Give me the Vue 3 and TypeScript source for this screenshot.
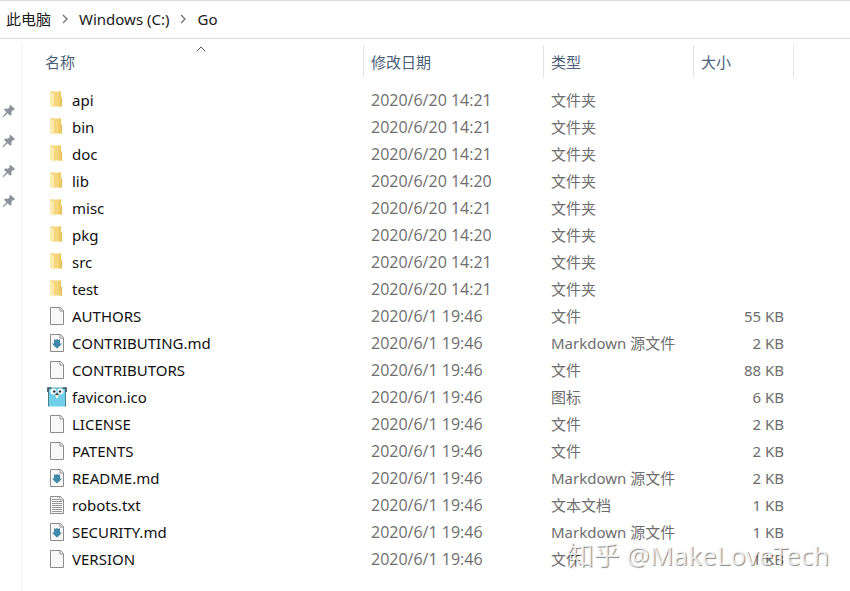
<script setup lang="ts">
type Kind = 'folder' | 'file' | 'markdown' | 'gopher' | 'text'

interface Entry {
  name: string
  modified: string
  kind: Kind
  size?: string
}

const crumbs: string[] = ['此电脑', 'Windows (C:)', 'Go']
const pinnedCount = 4

const typeLabels: Record<Kind, string> = {
  folder: '文件夹',
  file: '文件',
  markdown: 'Markdown 源文件',
  gopher: '图标',
  text: '文本文档',
}

const entries: Entry[] = [
  { name: 'api', modified: '2020/6/20 14:21', kind: 'folder' },
  { name: 'bin', modified: '2020/6/20 14:21', kind: 'folder' },
  { name: 'doc', modified: '2020/6/20 14:21', kind: 'folder' },
  { name: 'lib', modified: '2020/6/20 14:20', kind: 'folder' },
  { name: 'misc', modified: '2020/6/20 14:21', kind: 'folder' },
  { name: 'pkg', modified: '2020/6/20 14:20', kind: 'folder' },
  { name: 'src', modified: '2020/6/20 14:21', kind: 'folder' },
  { name: 'test', modified: '2020/6/20 14:21', kind: 'folder' },
  { name: 'AUTHORS', modified: '2020/6/1 19:46', kind: 'file', size: '55 KB' },
  { name: 'CONTRIBUTING.md', modified: '2020/6/1 19:46', kind: 'markdown', size: '2 KB' },
  { name: 'CONTRIBUTORS', modified: '2020/6/1 19:46', kind: 'file', size: '88 KB' },
  { name: 'favicon.ico', modified: '2020/6/1 19:46', kind: 'gopher', size: '6 KB' },
  { name: 'LICENSE', modified: '2020/6/1 19:46', kind: 'file', size: '2 KB' },
  { name: 'PATENTS', modified: '2020/6/1 19:46', kind: 'file', size: '2 KB' },
  { name: 'README.md', modified: '2020/6/1 19:46', kind: 'markdown', size: '2 KB' },
  { name: 'robots.txt', modified: '2020/6/1 19:46', kind: 'text', size: '1 KB' },
  { name: 'SECURITY.md', modified: '2020/6/1 19:46', kind: 'markdown', size: '1 KB' },
  { name: 'VERSION', modified: '2020/6/1 19:46', kind: 'file', size: '1 KB' },
]
</script>

<template>
  <div class="explorer">
    <nav class="path">
      <template v-for="(crumb, i) in crumbs" :key="crumb">
        <svg v-if="i > 0" class="chevron" viewBox="0 0 8 10">
          <path d="M2 1l4 4-4 4" fill="none" stroke="#777" stroke-width="1.4" />
        </svg>
        <a href="#">{{ crumb }}</a>
      </template>
    </nav>

    <div class="body">
      <aside class="pins">
        <svg v-for="n in pinnedCount" :key="n" class="pin" viewBox="0 0 14 14">
          <path
            d="M8.3 .8 L13 5 L11.6 6.2 L10.9 6.1 L9.4 8 L9.6 10.6 L8.2 11.7 L5.6 9.2 L1.8 12.8 L.6 13.2 L.9 12 L4.5 8.2 L2 5.8 L3.2 4.5 L6 4.7 L7.8 3 L7.3 1.9 Z"
            fill="#8b9299"
          />
        </svg>
      </aside>

      <main class="content">
        <table class="files">
          <colgroup>
            <col class="c-name" />
            <col class="c-date" />
            <col class="c-type" />
            <col class="c-size" />
            <col />
          </colgroup>
          <thead>
            <tr>
              <th scope="col" class="name">
                <button type="button">名称</button>
                <svg class="sort" viewBox="0 0 10 6">
                  <path d="M.7 5.3L5 1l4.3 4.3" fill="none" stroke="#555" />
                </svg>
              </th>
              <th scope="col"><button type="button">修改日期</button></th>
              <th scope="col"><button type="button">类型</button></th>
              <th scope="col"><button type="button">大小</button></th>
              <td></td>
            </tr>
          </thead>
          <tbody>
            <tr v-for="entry in entries" :key="entry.name">
              <td class="name">
                <div class="entry">
                  <svg v-if="entry.kind === 'folder'" class="icon" viewBox="0 0 20 20">
                    <path d="M3 1.5h11V7l1 1v8.5H6z" fill="#f5d67c" />
                    <path d="M11.5 1.5H14V7l1 1v8.5h-3.5z" fill="#efcb68" />
                    <path d="M14 8h1v8.5h-1z" fill="#e3bd58" />
                    <path d="M3 1.5l4 2.5v14l-4-2z" fill="#fdeab0" />
                    <path d="M3 1.5h4V4z" fill="#f3d98e" />
                  </svg>
                  <svg v-else-if="entry.kind === 'gopher'" class="icon" viewBox="0 0 20 20">
                    <path d="M1.5 1h17v18.5H1.5z" fill="#70cfe9" />
                    <path d="M1 5V1h3.5M15.5 1H19v4" fill="none" stroke="#344c55" stroke-width="1.6" />
                    <path d="M1.5 5v14.5M18.5 5v14.5" stroke="#4a7e8c" />
                    <path d="M4.5 1h11" stroke="#5aa6ba" />
                    <circle cx="6.5" cy="4.5" r="3" fill="#fff" />
                    <circle cx="13.5" cy="4.5" r="3" fill="#fff" />
                    <circle cx="7.3" cy="4.5" r="1.2" fill="#26343a" />
                    <circle cx="13" cy="4.5" r="1.2" fill="#26343a" />
                    <ellipse cx="10" cy="7.2" rx="1.6" ry="1" fill="#3d3430" />
                    <ellipse cx="10" cy="8.7" rx="2" ry="1" fill="#e8d4b2" />
                    <path d="M9 9h2v2H9z" fill="#fff" />
                  </svg>
                  <svg v-else class="icon" viewBox="0 0 20 20">
                    <path d="M3.5 1.5h10l3 3v14h-13z" fill="#f8f8f8" stroke="#8c8c8c" />
                    <path d="M13 1.5v3.5h3.5" fill="#fff" stroke="#8c8c8c" />
                    <path
                      v-if="entry.kind === 'markdown'"
                      d="M7 6l1.500 1L10 6l1.500 1L13 6v4.500h2l-2 2.200-3 2.800-3-2.800-2-2.200h2z"
                      fill="#3f88a8"
                    />
                    <path
                      v-if="entry.kind === 'text'"
                      d="M5 4.500h7M5 6.500h10M5 8.500h10M5 10.500h10M5 12.500h10M5 14.500h10M5 16.500h10"
                      stroke="#999"
                    />
                  </svg>
                  <span>{{ entry.name }}</span>
                </div>
              </td>
              <td class="date">{{ entry.modified }}</td>
              <td>{{ typeLabels[entry.kind] }}</td>
              <td class="size">{{ entry.size }}</td>
              <td></td>
            </tr>
          </tbody>
        </table>
        <div class="watermark">知乎 @MakeLoveTech</div>
      </main>
    </div>
  </div>
</template>

<style>
body {
  margin: 0;
  background: #fff;
}
</style>

<style scoped>
.explorer {
  font: 15px/20px 'Noto Sans', 'Noto Sans CJK SC', sans-serif;
  color: #6e6e6e;
}

.path {
  display: flex;
  align-items: center;
  gap: 10px;
  box-sizing: border-box;
  height: 39px;
  padding: 0 6px 2px;
  border-top: 1px solid #d9d9d9;
  border-bottom: 1px solid #d9d9d9;
}

.path a {
  color: #1a1a1a;
  text-decoration: none;
}

.chevron {
  width: 8px;
  height: 10px;
}

.body {
  display: flex;
}

.pins {
  display: flex;
  flex-direction: column;
  gap: 16px;
  box-sizing: border-box;
  flex: 0 0 22px;
  margin-top: 5px;
  padding: 60px 0 0 2px;
  border-right: 1px solid #f3f3f3;
}

.pin {
  width: 14px;
  height: 14px;
}

.content {
  position: relative;
  flex: 1;
  padding-bottom: 18px;
}

.files {
  width: 100%;
  table-layout: fixed;
  border-collapse: collapse;
}

.c-name {
  width: 342px;
}

.c-date {
  width: 180px;
}

.c-type {
  width: 150px;
}

.c-size {
  width: 100px;
}

th,
td {
  box-sizing: border-box;
  height: 27px;
  padding: 0 10px 2px 7px;
  text-align: left;
  font-weight: 400;
  white-space: nowrap;
}

thead th {
  position: relative;
  height: 48px;
  background: linear-gradient(#e2e5e8, #e2e5e8) right 0 top 6px / 1px 33px no-repeat;
}

th button {
  padding: 0;
  border: 0;
  background: none;
  font: inherit;
  color: #4c607a;
}

th.name {
  padding-left: 23px;
}

td.name {
  padding-left: 25px;
}

.sort {
  position: absolute;
  top: 7px;
  left: 51%;
  width: 10px;
  height: 6px;
}

.entry {
  display: flex;
  align-items: center;
  gap: 5px;
  color: #111;
}

.icon {
  width: 20px;
  height: 20px;
}

td.date {
  font-family: 'Open Sans', sans-serif;
  font-size: 16px;
}

td.size {
  text-align: right;
}

.watermark {
  position: absolute;
  right: 21px;
  bottom: 19px;
  font-size: 26px;
  line-height: 34px;
  color: rgba(255, 255, 255, 0.8);
  text-shadow: 1px 1px 1px rgba(0, 0, 0, 0.45);
}
</style>
